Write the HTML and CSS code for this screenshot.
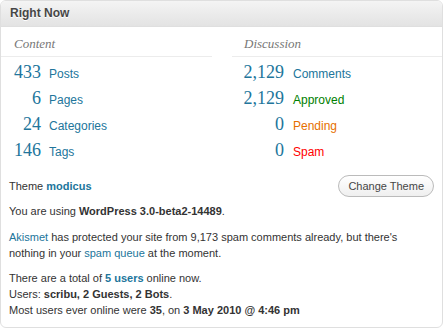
FILE: index.html
```html
<!DOCTYPE html>
<html lang="en">
<head>
    <meta charset="UTF-8">
    <title>Right Now</title>
    <link rel="stylesheet" href="styles.css">
</head>
<body>
    <div class="postbox">
        <h3 class="hndle">Right Now</h3>

        <div class="inside">
            <div class="tables">
                <div class="table">
                    <p class="sub">Content</p>
                    <div class="row"><span class="b">433</span><a class="t">Posts</a></div>
                    <div class="row"><span class="b">6</span><a class="t">Pages</a></div>
                    <div class="row"><span class="b">24</span><a class="t">Categories</a></div>
                    <div class="row"><span class="b">146</span><a class="t">Tags</a></div>
                </div>
                <div class="table discussion">
                    <p class="sub">Discussion</p>
                    <div class="row"><span class="b">2,129</span><a class="t">Comments</a></div>
                    <div class="row"><span class="b">2,129</span><a class="t approved">Approved</a></div>
                    <div class="row"><span class="b">0</span><a class="t waiting">Pending</a></div>
                    <div class="row"><span class="b">0</span><a class="t spam">Spam</a></div>
                </div>
            </div>

            <div class="versions">
                <div class="theme-row">
                    <span>Theme <a class="link"><b>modicus</b></a></span>
                    <a class="button">Change Theme</a>
                </div>
                <p>You are using <b>WordPress 3.0-beta2-14489</b>.</p>
                <p class="akismet"><a class="link">Akismet</a> has protected your site from 9,173 spam comments already, but there's nothing in your <a class="link">spam queue</a> at the moment.</p>
                <p>There are a total of <a class="link"><b>5 users</b></a> online now.<br>
                Users: <b>scribu, 2 Guests, 2 Bots</b>.<br>
                Most users ever online were <b>35</b>, on <b>3 May 2010 @ 4:46 pm</b></p>
            </div>
        </div>
    </div>
</body>
</html>
```

FILE: styles.css
```css
body { margin: 0; background: #fff; font-family: "Liberation Sans", Arial, sans-serif; font-size: 11px; color: #333; }

.postbox { width: 443px; height: 328px; box-sizing: border-box; border: 1px solid #dfdfdf; border-radius: 6px; overflow: hidden; }
.hndle { margin: 0; height: 25px; line-height: 25px; padding: 0 9px; font-size: 12px; font-weight: bold; color: #464646; text-shadow: 0 1px 0 #fff; background: linear-gradient(#f4f4f4, #e3e3e3); border-bottom: 1px solid #dfdfdf; }

.tables { display: flex; justify-content: space-between; }
.table { width: 211px; }
.discussion { width: 210px; }
.sub { margin: 0; height: 29px; padding: 0 0 0 13px; line-height: 34px; font-family: "Liberation Serif", Georgia, serif; font-style: italic; font-size: 13px; color: #777; border-bottom: 1px solid #ececec; }
.discussion .sub { padding-left: 12px; }
.table .row:first-of-type { margin-top: 2px; }

.row { display: flex; align-items: baseline; height: 26px; line-height: 26px; }
.b { width: 40px; text-align: right; font-family: "Liberation Serif", Georgia, serif; font-size: 18px; color: #21759b; }
.discussion .b { width: 52px; }
.t { margin-left: 8px; font-size: 12px; color: #21759b; }
.discussion .t { margin-left: 9px; }
.approved { color: #008000; }
.waiting { color: #e66f00; }
.spam { color: #ff0000; }

.versions { padding: 12px 8px 0 8px; }
.theme-row { display: flex; justify-content: space-between; align-items: center; height: 22px; margin-bottom: 6px; }
.link { color: #21759b; }
.button { padding: 0 9px; height: 20px; line-height: 20px; border: 1px solid #bbb; border-radius: 11px; background: linear-gradient(#fff, #efefef); color: #464646; font-size: 11px; }
.versions p { margin: 0 0 9px; line-height: 16px; }
.versions .akismet { margin-top: 10px; }
```
